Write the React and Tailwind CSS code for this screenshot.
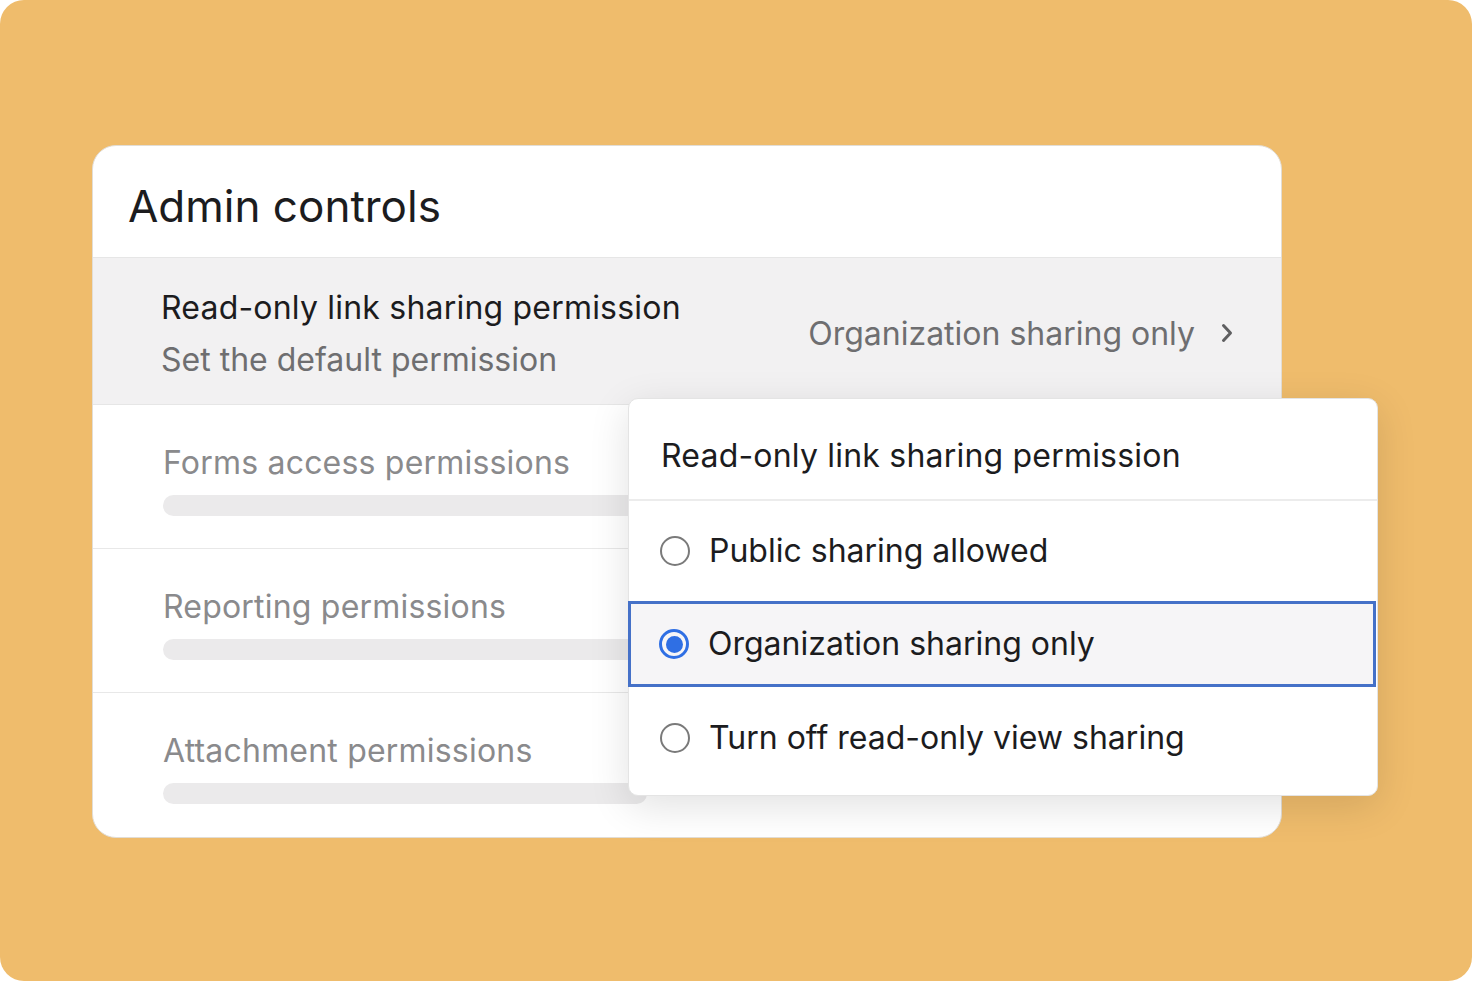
const rows = ['Forms access permissions', 'Reporting permissions', 'Attachment permissions'];

const options = [
  { label: 'Public sharing allowed', h: 'h-[100px]' },
  { label: 'Organization sharing only', h: 'h-[86px]', selected: true },
  { label: 'Turn off read-only view sharing', h: 'h-[102px]' },
];

function Radio({ selected }) {
  if (selected) {
    return (
      <span className="flex h-[30px] w-[30px] shrink-0 items-center justify-center rounded-full border-[3px] border-[#2f6fe4]">
        <span className="h-[17px] w-[17px] rounded-full bg-[#2f6fe4]" />
      </span>
    );
  }
  return <span className="h-[30px] w-[30px] shrink-0 rounded-full border-2 border-[#7a7a7a]" />;
}

export default function App() {
  return (
    <div className="h-[981px] w-[1472px] bg-white font-['Inter',sans-serif]">
      <div className="h-full w-full rounded-[24px] bg-[#efbc6c] pl-[92px] pt-[145px]">
        <div className="relative w-[1190px] rounded-[24px] border border-[#e2ddd5] bg-white">
          <div className="flex h-[112px] items-center border-b border-[#e6e6e6] pl-[35px] pt-[8px]">
            <h1 className="text-[44px] font-normal text-[#1c1c1e]">Admin controls</h1>
          </div>

          <div className="flex h-[147px] items-center justify-between border-b border-[#e6e6e6] bg-[#f2f1f2] pl-[68px] pr-[48px] pt-[6px]">
            <div className="flex flex-col gap-[12px]">
              <span className="text-[32px] leading-[40px] tracking-[0.2px] text-[#1c1c1e]">Read-only link sharing permission</span>
              <span className="text-[32px] leading-[40px] text-[#6e6e70]">Set the default permission</span>
            </div>
            <div className="flex items-center gap-[26px]">
              <span className="text-[32px] text-[#6e6e70]">Organization sharing only</span>
              <svg width="12" height="20" viewBox="0 0 12 20" fill="none" className="mt-[-2px]">
                <polyline points="2.5,2.5 9.5,10 2.5,17.5" stroke="#5f5f61" strokeWidth="3" strokeLinecap="round" strokeLinejoin="round" />
              </svg>
            </div>
          </div>

          {rows.map((r, i) => (
            <div
              key={r}
              className={`h-[144px] pl-[70px] pt-[38px] ${i < rows.length - 1 ? 'border-b border-[#e8e8e8]' : ''}`}
            >
              <div className="text-[32px] leading-[40px] tracking-[0.2px] text-[#8a8a8c]">{r}</div>
              <div className="mt-[12px] h-[21px] w-[484px] rounded-full bg-[#ebeaeb]" />
            </div>
          ))}

          <div className="absolute left-[535px] top-[252px] w-[750px] rounded-[10px] border border-[#e4e4e4] bg-white pb-[6px] shadow-[0_10px_40px_rgba(0,0,0,0.12)]">
            <div className="flex h-[102px] items-center border-b-2 border-[#ececec] pl-[32px] pt-[14px]">
              <span className="text-[32px] tracking-[0.2px] text-[#1c1c1e]">Read-only link sharing permission</span>
            </div>
            {options.map((o) => (
              <div
                key={o.label}
                className={`flex items-center gap-[19px] ${o.h} ${
                  o.selected ? 'mr-[1px] -ml-px border-[3px] border-[#4571c8] bg-[#f6f5f7] pl-[28px]' : 'pl-[31px]'
                }`}
              >
                <Radio selected={o.selected} />
                <span className="text-[32px] text-[#1c1c1e]">{o.label}</span>
              </div>
            ))}
          </div>
        </div>
      </div>
    </div>
  );
}
